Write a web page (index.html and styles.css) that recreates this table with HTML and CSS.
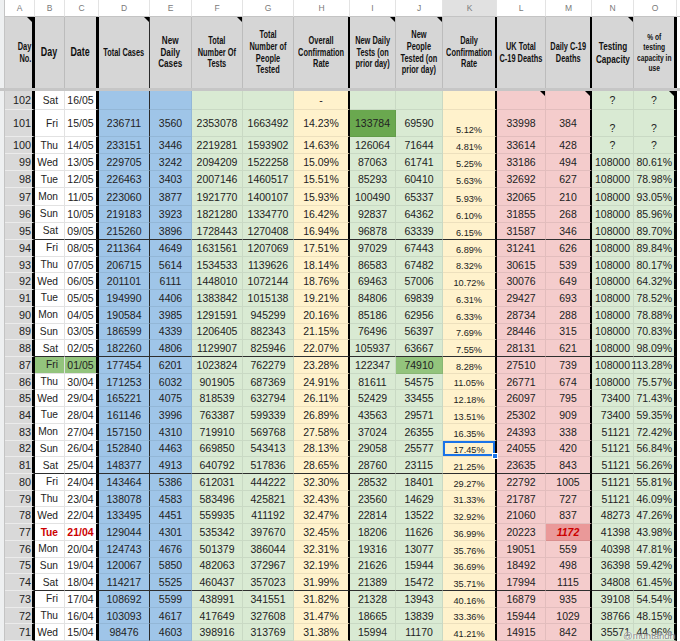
FILE: index.html
```html
<!DOCTYPE html>
<html>
<head>
<meta charset="utf-8">
<link rel="stylesheet" href="styles.css">
</head>
<body>
<div class="sheet">
  <div class="cols"><span>A</span><span>B</span><span>C</span><span>D</span><span>E</span><span>F</span><span>G</span><span>H</span><span>I</span><span>J</span><span class="on">K</span><span>L</span><span>M</span><span>N</span><span>O</span><span>P</span></div>
  <div class="h">
    <span class="cm ra"><i>Day<br>No.</i></span>
    <span class="big"><i>Day</i></span>
    <span class="big"><i>Date</i></span>
    <span class="cm"><i>Total Cases</i></span>
    <span class="mid"><i>New<br>Daily<br>Cases</i></span>
    <span class="cm"><i>Total<br>Number Of<br>Tests</i></span>
    <span><i>Total<br>Number of<br>People<br>Tested</i></span>
    <span><i>Overall<br>Confirmation<br>Rate</i></span>
    <span class="cm"><i>New Daily<br>Tests (on<br>prior day)</i></span>
    <span class="cm"><i>New<br>People<br>Tested (on<br>prior day)</i></span>
    <span><i>Daily<br>Confirmation<br>Rate</i></span>
    <span><i>UK Total<br>C-19 Deaths</i></span>
    <span><i>Daily C-19<br>Deaths</i></span>
    <span class="cm big2"><i>Testing<br>Capacity</i></span>
    <span class="sm"><i>% of<br>testing<br>capacity in<br>use</i></span>
  </div>
  <div class="frz"></div>
  <div class="r t102"><span>102</span><span>Sat</span><span>16/05</span><span></span><span></span><span></span><span></span><span>-</span><span></span><span></span><span></span><span class="cm"></span><span class="cm"></span><span class="cc">?</span><span class="cc cm">?</span></div>
  <div class="r t101"><span>101</span><span>Fri</span><span>15/05</span><span>236711</span><span>3560</span><span>2353078</span><span>1663492</span><span>14.23%</span><span class="dg">133784</span><span>69590</span><span>5.12%</span><span>33998</span><span>384</span><span class="cc bot">?</span><span class="cc bot">?</span></div>
  <div class="r a"><span>100</span><span>Thu</span><span>14/05</span><span>233151</span><span>3446</span><span>2219281</span><span>1593902</span><span>14.63%</span><span>126064</span><span>71644</span><span>4.81%</span><span>33614</span><span>428</span><span class="cc">?</span><span class="cc">?</span></div>
  <div class="r a"><span>99</span><span>Wed</span><span>13/05</span><span>229705</span><span>3242</span><span>2094209</span><span>1522258</span><span>15.09%</span><span>87063</span><span>61741</span><span>5.25%</span><span>33186</span><span>494</span><span>108000</span><span>80.61%</span></div>
  <div class="r a"><span>98</span><span>Tue</span><span>12/05</span><span>226463</span><span>3403</span><span>2007146</span><span>1460517</span><span>15.51%</span><span>85293</span><span>60410</span><span>5.63%</span><span>32692</span><span>627</span><span>108000</span><span>78.98%</span></div>
  <div class="r a"><span>97</span><span>Mon</span><span>11/05</span><span>223060</span><span>3877</span><span>1921770</span><span>1400107</span><span>15.93%</span><span>100490</span><span>65337</span><span>5.93%</span><span>32065</span><span>210</span><span>108000</span><span>93.05%</span></div>
  <div class="r a"><span>96</span><span>Sun</span><span>10/05</span><span>219183</span><span>3923</span><span>1821280</span><span>1334770</span><span>16.42%</span><span>92837</span><span>64362</span><span>6.10%</span><span>31855</span><span>268</span><span>108000</span><span>85.96%</span></div>
  <div class="r a wk"><span>95</span><span>Sat</span><span>09/05</span><span>215260</span><span>3896</span><span>1728443</span><span>1270408</span><span>16.94%</span><span>96878</span><span>63339</span><span>6.15%</span><span>31587</span><span>346</span><span>108000</span><span>89.70%</span></div>
  <div class="r"><span>94</span><span>Fri</span><span>08/05</span><span>211364</span><span>4649</span><span>1631561</span><span>1207069</span><span>17.51%</span><span>97029</span><span>67443</span><span>6.89%</span><span>31241</span><span>626</span><span>108000</span><span>89.84%</span></div>
  <div class="r"><span>93</span><span>Thu</span><span>07/05</span><span>206715</span><span>5614</span><span>1534533</span><span>1139626</span><span>18.14%</span><span>86583</span><span>67482</span><span>8.32%</span><span>30615</span><span>539</span><span>108000</span><span>80.17%</span></div>
  <div class="r"><span>92</span><span>Wed</span><span>06/05</span><span>201101</span><span>6111</span><span>1448010</span><span>1072144</span><span>18.76%</span><span>69463</span><span>57006</span><span>10.72%</span><span>30076</span><span>649</span><span>108000</span><span>64.32%</span></div>
  <div class="r"><span>91</span><span>Tue</span><span>05/05</span><span>194990</span><span>4406</span><span>1383842</span><span>1015138</span><span>19.21%</span><span>84806</span><span>69839</span><span>6.31%</span><span>29427</span><span>693</span><span>108000</span><span>78.52%</span></div>
  <div class="r"><span>90</span><span>Mon</span><span>04/05</span><span>190584</span><span>3985</span><span>1291591</span><span>945299</span><span>20.16%</span><span>85186</span><span>62956</span><span>6.33%</span><span>28734</span><span>288</span><span>108000</span><span>78.88%</span></div>
  <div class="r"><span>89</span><span>Sun</span><span>03/05</span><span>186599</span><span>4339</span><span>1206405</span><span>882343</span><span>21.15%</span><span>76496</span><span>56397</span><span>7.69%</span><span>28446</span><span>315</span><span>108000</span><span>70.83%</span></div>
  <div class="r wk"><span>88</span><span>Sat</span><span>02/05</span><span>182260</span><span>4806</span><span>1129907</span><span>825946</span><span>22.07%</span><span>105937</span><span>63667</span><span>7.55%</span><span>28131</span><span>621</span><span>108000</span><span>98.09%</span></div>
  <div class="r"><span>87</span><span class="lg">Fri</span><span class="lg">01/05</span><span>177454</span><span>6201</span><span>1023824</span><span>762279</span><span>23.28%</span><span>122347</span><span class="lg">74910</span><span>8.28%</span><span>27510</span><span>739</span><span>108000</span><span>113.28%</span></div>
  <div class="r"><span>86</span><span>Thu</span><span>30/04</span><span>171253</span><span>6032</span><span>901905</span><span>687369</span><span>24.91%</span><span>81611</span><span>54575</span><span>11.05%</span><span>26771</span><span>674</span><span>108000</span><span>75.57%</span></div>
  <div class="r"><span>85</span><span>Wed</span><span>29/04</span><span>165221</span><span>4075</span><span>818539</span><span>632794</span><span>26.11%</span><span>52429</span><span>33455</span><span>12.18%</span><span>26097</span><span>795</span><span>73400</span><span>71.43%</span></div>
  <div class="r"><span>84</span><span>Tue</span><span>28/04</span><span>161146</span><span>3996</span><span>763387</span><span>599339</span><span>26.89%</span><span>43563</span><span>29571</span><span>13.51%</span><span>25302</span><span>909</span><span>73400</span><span>59.35%</span></div>
  <div class="r"><span>83</span><span>Mon</span><span>27/04</span><span>157150</span><span>4310</span><span>719910</span><span>569768</span><span>27.58%</span><span>37024</span><span>26355</span><span>16.35%</span><span>24393</span><span>338</span><span>51121</span><span>72.42%</span></div>
  <div class="r"><span>82</span><span>Sun</span><span>26/04</span><span>152840</span><span>4463</span><span>669850</span><span>543413</span><span>28.13%</span><span>29058</span><span>25577</span><span class="sel">17.45%</span><span>24055</span><span>420</span><span>51121</span><span>56.84%</span></div>
  <div class="r wk"><span>81</span><span>Sat</span><span>25/04</span><span>148377</span><span>4913</span><span>640792</span><span>517836</span><span>28.65%</span><span>28760</span><span>23115</span><span>21.25%</span><span>23635</span><span>843</span><span>51121</span><span>56.26%</span></div>
  <div class="r"><span>80</span><span>Fri</span><span>24/04</span><span>143464</span><span>5386</span><span>612031</span><span>444222</span><span>32.30%</span><span>28532</span><span>18401</span><span>29.27%</span><span>22792</span><span>1005</span><span>51121</span><span>55.81%</span></div>
  <div class="r"><span>79</span><span>Thu</span><span>23/04</span><span>138078</span><span>4583</span><span>583496</span><span>425821</span><span>32.43%</span><span>23560</span><span>14629</span><span>31.33%</span><span>21787</span><span>727</span><span>51121</span><span>46.09%</span></div>
  <div class="r"><span>78</span><span>Wed</span><span>22/04</span><span>133495</span><span>4451</span><span>559935</span><span>411192</span><span>32.47%</span><span>22814</span><span>13522</span><span>32.92%</span><span>21060</span><span>837</span><span>48273</span><span>47.26%</span></div>
  <div class="r"><span>77</span><span class="red">Tue</span><span class="red">21/04</span><span>129044</span><span>4301</span><span>535342</span><span>397670</span><span>32.45%</span><span>18206</span><span>11626</span><span>36.99%</span><span>20223</span><span class="hot">1172</span><span>41398</span><span>43.98%</span></div>
  <div class="r"><span>76</span><span>Mon</span><span>20/04</span><span>124743</span><span>4676</span><span>501379</span><span>386044</span><span>32.31%</span><span>19316</span><span>13077</span><span>35.76%</span><span>19051</span><span>559</span><span>40398</span><span>47.81%</span></div>
  <div class="r"><span>75</span><span>Sun</span><span>19/04</span><span>120067</span><span>5850</span><span>482063</span><span>372967</span><span>32.19%</span><span>21626</span><span>15944</span><span>36.69%</span><span>18492</span><span>498</span><span>36398</span><span>59.42%</span></div>
  <div class="r wk"><span>74</span><span>Sat</span><span>18/04</span><span>114217</span><span>5525</span><span>460437</span><span>357023</span><span>31.99%</span><span>21389</span><span>15472</span><span>35.71%</span><span>17994</span><span>1115</span><span>34808</span><span>61.45%</span></div>
  <div class="r"><span>73</span><span>Fri</span><span>17/04</span><span>108692</span><span>5599</span><span>438991</span><span>341551</span><span>31.82%</span><span>21328</span><span>13943</span><span>40.16%</span><span>16879</span><span>935</span><span>39108</span><span>54.54%</span></div>
  <div class="r"><span>72</span><span>Thu</span><span>16/04</span><span>103093</span><span>4617</span><span>417649</span><span>327608</span><span>31.47%</span><span>18665</span><span>13839</span><span>33.36%</span><span>15944</span><span>1029</span><span>38766</span><span>48.15%</span></div>
  <div class="r"><span>71</span><span>Wed</span><span>15/04</span><span>98476</span><span>4603</span><span>398916</span><span>313769</span><span>31.38%</span><span>15994</span><span>11170</span><span>41.21%</span><span>14915</span><span>842</span><span>35571</span><span>44.96%</span></div>
  <div class="wm">@muntahdh</div>
</div>
</body>
</html>
```

FILE: styles.css
```css
html, body {
  margin: 0;
  padding: 0;
  background: #fff;
}

.sheet {
  position: relative;
  width: 680px;
  height: 641px;
  overflow: hidden;
  box-sizing: border-box;
  padding-left: 5px;
  background: linear-gradient(90deg, #eef0f1 0 4px, #c4c4c4 4px 5px, #fff 5px);
  font-family: "Liberation Sans", Arial, sans-serif;
}

.cols {
  display: grid;
  grid-template-columns: 30px 30px 34px 51px 42px 51px 51px 56px 46px 47px 54px 49px 46px 42px 43px 40px;
  height: 17px;
}

.cols span {
  display: flex;
  align-items: center;
  justify-content: center;
  box-sizing: border-box;
  font-size: 8.5px;
  color: #7a7a7a;
  background: #fff;
  border-right: 1px solid #e3e3e3;
  border-bottom: 1px solid #c4c4c4;
}

.cols .on {
  background: #e1e1e1;
}

.h,
.r {
  display: grid;
  grid-template-columns: 30px 30px 34px 51px 42px 51px 51px 56px 46px 47px 54px 49px 46px 42px 43px;
}

.h {
  height: 71px;
}

.h > span {
  position: relative;
  display: flex;
  align-items: center;
  justify-content: center;
  text-align: center;
  box-sizing: border-box;
  background: #d6d6d6;
  border-right: 1px solid #bcbcbc;
  font-family: "Liberation Sans", Arial, sans-serif;
  font-weight: bold;
  font-size: 10px;
  line-height: 11.6px;
  color: #111;
  white-space: nowrap;
  min-width: 0;
}

.h i {
  display: block;
  font-style: normal;
  transform: scaleX(0.74);
  transform-origin: center center;
}

.h > .ra {
  justify-content: flex-end;
  text-align: right;
  padding-right: 1px;
}

.h > .ra i {
  transform-origin: right center;
}

.h > .big {
  font-size: 12px;
}

.h > .mid {
  font-size: 11px;
}

.h > .big2 {
  font-size: 11px;
  line-height: 12.6px;
}

.h > .sm {
  font-size: 9px;
  line-height: 10.5px;
}

.frz {
  height: 3px;
  margin-left: -5px;
  background: #c6c6c6;
}

.r {
  height: 16.73px;
}

.r.a {
  height: 17.17px;
}

.r.t102 {
  height: 19px;
}

.r.t101 {
  height: 27px;
}

.r > span {
  position: relative;
  display: flex;
  align-items: center;
  justify-content: center;
  box-sizing: border-box;
  min-width: 0;
  white-space: nowrap;
  font-size: 10.5px;
  color: #222;
  border-right: 1px solid rgba(0, 0, 0, 0.07);
  border-bottom: 1px solid rgba(0, 0, 0, 0.07);
}

/* column A */
.r > :nth-child(1) {
  background: #d9d9d9;
  justify-content: flex-end;
  padding-right: 1px;
  font-size: 10.8px;
  border-bottom-color: #ebebeb;
}

.r > :nth-child(1),
.h > :nth-child(1) {
  border-right: 3px solid #000;
}

/* column B */
.r > :nth-child(2) {
  justify-content: flex-end;
  padding-right: 6px;
  font-size: 10.2px;
  border-right-color: #e2e2e2;
  border-bottom-color: #e2e2e2;
}

/* column C */
.r > :nth-child(3) {
  border-bottom-color: #e2e2e2;
}

.r > :nth-child(3),
.h > :nth-child(3) {
  border-right: 3px solid #000;
}

/* blue D, E */
.r > :nth-child(4),
.r > :nth-child(5) {
  background: #9fc5e8;
}

.r > :nth-child(4),
.h > :nth-child(4) {
  border-right: 1px solid #2a2a2a;
}

/* greens */
.r > :nth-child(6),
.r > :nth-child(7),
.r > :nth-child(9),
.r > :nth-child(10),
.r > :nth-child(14),
.r > :nth-child(15) {
  background: #d9ead3;
}

/* yellows */
.r > :nth-child(8),
.r > :nth-child(11) {
  background: #fff2cc;
}

.r > :nth-child(8),
.h > :nth-child(8),
.r > :nth-child(11),
.h > :nth-child(11),
.r > :nth-child(13),
.h > :nth-child(13) {
  border-right: 2px solid #000;
}

.r > :nth-child(11) {
  align-items: flex-end;
  font-size: 9.2px;
  padding-bottom: 1px;
}

/* pinks */
.r > :nth-child(12),
.r > :nth-child(13) {
  background: #f4cccc;
}

/* N, O */
.r > :nth-child(14) {
  justify-content: flex-end;
  padding-right: 3px;
}

.r > :nth-child(15) {
  justify-content: flex-end;
  padding-right: 2px;
}

.r > :nth-child(15),
.h > :nth-child(15) {
  border-right: 3px solid #000;
}

/* week separators */
.r.wk > span:not(:first-child) {
  border-bottom: 1.5px solid #2e2e2e;
}

/* special cells */
.r > span.cc {
  justify-content: center;
  padding-right: 0;
}

.r > span.bot {
  align-items: flex-end;
  padding-bottom: 2px;
}

.r > span.dg {
  background: #6aa84f;
}

.r > span.lg {
  background: #93c47d;
}

.r > span.red {
  color: #cc0000;
  font-weight: bold;
}

.r > span.hot {
  background: #ea9999;
  color: #cc0000;
  font-weight: bold;
  font-style: italic;
}

.r > span.sel {
  box-shadow: inset 0 0 0 2px #1a73e8;
}

.r > span.sel::after {
  content: "";
  position: absolute;
  right: -3px;
  bottom: -3px;
  width: 4px;
  height: 4px;
  background: #1a73e8;
  border: 1px solid #fff;
  z-index: 2;
}

.cm::after {
  content: "";
  position: absolute;
  top: 0;
  right: 0;
  width: 0;
  height: 0;
  border-style: solid;
  border-width: 0 5px 5px 0;
  border-color: transparent #000 transparent transparent;
}

.wm {
  position: absolute;
  left: 623px;
  top: 630px;
  font-family: "Liberation Sans", Arial, sans-serif;
  font-size: 9.5px;
  color: rgba(70, 70, 70, 0.65);
  text-shadow: 0 0 2px #fff, 0 0 1px #fff;
}
```
